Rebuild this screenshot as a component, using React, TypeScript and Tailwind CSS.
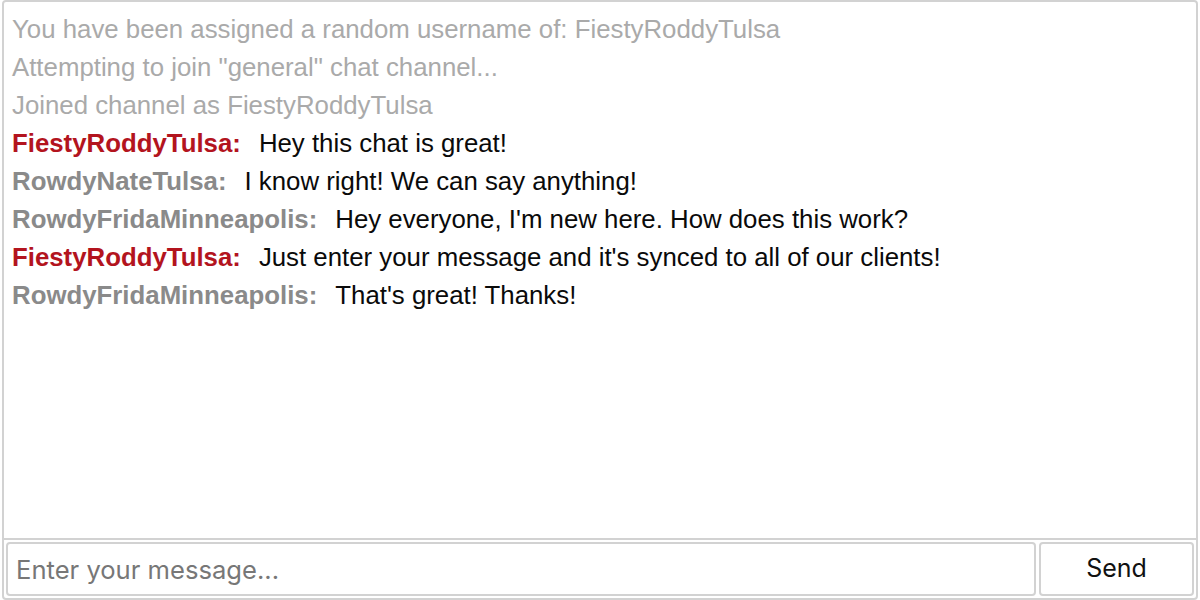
import { useState } from 'react'

type Line =
  | { kind: 'system'; text: string }
  | { kind: 'chat'; user: string; self: boolean; text: string }

const lines: Line[] = [
  { kind: 'system', text: 'You have been assigned a random username of: FiestyRoddyTulsa' },
  { kind: 'system', text: 'Attempting to join "general" chat channel...' },
  { kind: 'system', text: 'Joined channel as FiestyRoddyTulsa' },
  { kind: 'chat', user: 'FiestyRoddyTulsa', self: true, text: 'Hey this chat is great!' },
  { kind: 'chat', user: 'RowdyNateTulsa', self: false, text: 'I know right! We can say anything!' },
  { kind: 'chat', user: 'RowdyFridaMinneapolis', self: false, text: "Hey everyone, I'm new here. How does this work?" },
  { kind: 'chat', user: 'FiestyRoddyTulsa', self: true, text: "Just enter your message and it's synced to all of our clients!" },
  { kind: 'chat', user: 'RowdyFridaMinneapolis', self: false, text: "That's great! Thanks!" },
]

export default function App() {
  const [msg, setMsg] = useState('')

  return (
    <div className="h-[600px] w-[1200px] bg-white px-[2px] font-['Liberation_Sans',Arial,sans-serif]">
      <div className="flex h-full flex-col rounded-[4px] border-2 border-[#d2d2d2]">
        {/* Message log */}
        <div className="flex-1 overflow-hidden border-b-2 border-[#d2d2d2] px-2 pt-2 text-[25.8px] leading-[38px]">
          {lines.map((l, i) =>
            l.kind === 'system' ? (
              <div key={i} className="text-[#aaaaaa]">
                {l.text}
              </div>
            ) : (
              <div key={i} className="text-[#0a0a0a]">
                <span className={`mr-[18px] font-bold ${l.self ? 'text-[#b3141e]' : 'text-[#8a8a8a]'}`}>
                  {l.user}:
                </span>
                {l.text}
              </div>
            ),
          )}
        </div>

        {/* Input row */}
        <form className="flex gap-[3px] p-[2px] font-['Inter',sans-serif]" onSubmit={(e) => e.preventDefault()}>
          <input
            className="h-[54px] flex-1 rounded-[4px] border-2 border-[#d2d2d2] px-2 text-[25.6px] text-[#111] placeholder:text-[#777777] focus:outline-none"
            placeholder="Enter your message..."
            value={msg}
            onChange={(e) => setMsg(e.target.value)}
          />
          <button
            type="submit"
            className="h-[54px] w-[155px] rounded-[4px] border-2 border-[#d2d2d2] bg-white text-[25px] text-[#111]"
          >
            Send
          </button>
        </form>
      </div>
    </div>
  )
}
